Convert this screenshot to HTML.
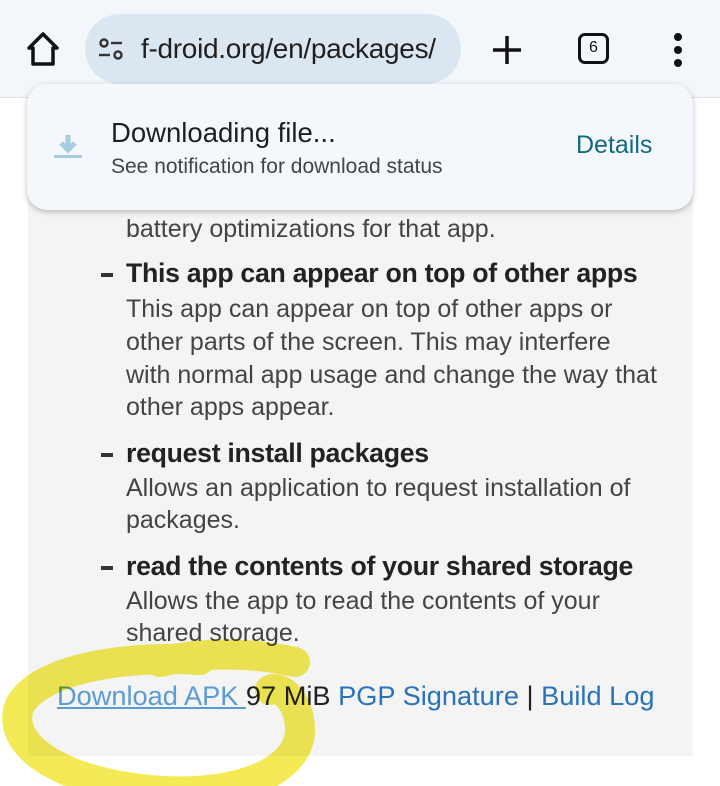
<!DOCTYPE html>
<html><head><style>
*{margin:0;padding:0;box-sizing:border-box}
body{width:720px;height:786px;overflow:hidden;background:#fff;font-family:"Liberation Sans",sans-serif;position:relative}
.bar{position:absolute;left:0;top:0;width:720px;height:98px;background:#f3f6fb;border-bottom:1px solid #dde0e4}
.url{position:absolute;left:85px;top:14px;width:376px;height:70px;border-radius:35px;background:#dbe7f0;font-size:28px;color:#1f1f1f;line-height:70px;padding-left:56px;white-space:nowrap;overflow:hidden;letter-spacing:-0.3px}
.panel{position:absolute;left:28px;top:98px;width:665px;height:658px;background:#f4f4f4}
.t{position:absolute;left:126px;font-size:25px;color:#444;white-space:nowrap}
.h{position:absolute;left:126px;font-size:26.7px;font-weight:bold;color:#222;white-space:nowrap;letter-spacing:-0.3px}
.d{position:absolute;left:101px;width:12px;height:4px;background:#333}
.pop{position:absolute;left:27px;top:84px;width:666px;height:126px;background:#f4f8fc;border-radius:20px;box-shadow:0 2px 6px rgba(0,0,0,.25)}
</style></head><body>
<div class="bar"></div>
<svg style="position:absolute;left:24px;top:30px" width="38" height="38" viewBox="0 0 38 38"><path d="M5 18 L19 4 L33 18 L29 18 L29 34 L9 34 L9 18 Z" fill="none" stroke="#111" stroke-width="3.5" stroke-linejoin="round"/></svg>
<div class="url">f-droid.org/en/packages/</div>
<svg style="position:absolute;left:98px;top:38px" width="28" height="24" viewBox="0 0 28 24"><circle cx="6" cy="5" r="3.5" fill="none" stroke="#333" stroke-width="2.4"/><line x1="13" y1="5" x2="24" y2="5" stroke="#333" stroke-width="2.4"/><line x1="1" y1="17" x2="12" y2="17" stroke="#333" stroke-width="2.4"/><circle cx="20" cy="17" r="3.5" fill="none" stroke="#333" stroke-width="2.4"/></svg>
<svg style="position:absolute;left:490px;top:33px" width="34" height="34"><path d="M17 3V31M3 17H31" stroke="#111" stroke-width="3.5"/></svg>
<div style="position:absolute;left:578px;top:33px;width:31px;height:31px;border:3.5px solid #111;border-radius:7px;font-size:16px;text-align:center;line-height:24px;color:#111">6</div>
<svg style="position:absolute;left:670px;top:32px" width="16" height="36"><circle cx="8" cy="5" r="4" fill="#111"/><circle cx="8" cy="18" r="4" fill="#111"/><circle cx="8" cy="31" r="4" fill="#111"/></svg>

<div class="panel"></div>
<div class="t" style="top:215px">battery optimizations for that app.</div>
<div class="d" style="top:273px"></div><div class="h" style="top:258px">This app can appear on top of other apps</div>
<div class="t" style="top:295px">This app can appear on top of other apps or</div>
<div class="t" style="top:328px">other parts of the screen. This may interfere</div>
<div class="t" style="top:361px">with normal app usage and change the way that</div>
<div class="t" style="top:393px">other apps appear.</div>
<div class="d" style="top:453px"></div><div class="h" style="top:438px">request install packages</div>
<div class="t" style="top:474px">Allows an application to request installation of</div>
<div class="t" style="top:506px">packages.</div>
<div class="d" style="top:566px"></div><div class="h" style="top:551px">read the contents of your shared storage</div>
<div class="t" style="top:587px">Allows the app to read the contents of your</div>
<div class="t" style="top:619px">shared storage.</div>
<div style="position:absolute;left:57px;top:680px;font-size:27.2px;white-space:nowrap;color:#222"><span style="color:#5b9bd5;text-decoration:underline">Download APK </span>97 MiB <span style="color:#2a73b8">PGP Signature</span> | <span style="color:#2a73b8">Build Log</span></div>

<svg style="position:absolute;left:0;top:0;mix-blend-mode:multiply" width="720" height="786"><path d="M295 662 C250 652 200 652 160 662 M200 660 C120 655 40 670 20 705 C5 740 50 780 150 790 C240 798 300 770 300 730 C300 700 280 685 270 690" fill="none" stroke="#f3e843" stroke-width="30" stroke-linecap="round" opacity="0.9"/></svg>

<div class="pop">
<svg style="position:absolute;left:26px;top:50px" width="30" height="26"><path d="M15 1V15M8 9L15 16L22 9" stroke="#a8cde0" stroke-width="5" fill="none"/><rect x="1" y="21" width="28" height="3" fill="#a8cde0"/></svg>
<div style="position:absolute;left:84px;top:33px;font-size:27.5px;color:#1f1f1f">Downloading file...</div>
<div style="position:absolute;left:84px;top:71px;font-size:21px;color:#444">See notification for download status</div>
<div style="position:absolute;left:549px;top:47px;font-size:25px;color:#136a80">Details</div>
</div>
</body></html>
